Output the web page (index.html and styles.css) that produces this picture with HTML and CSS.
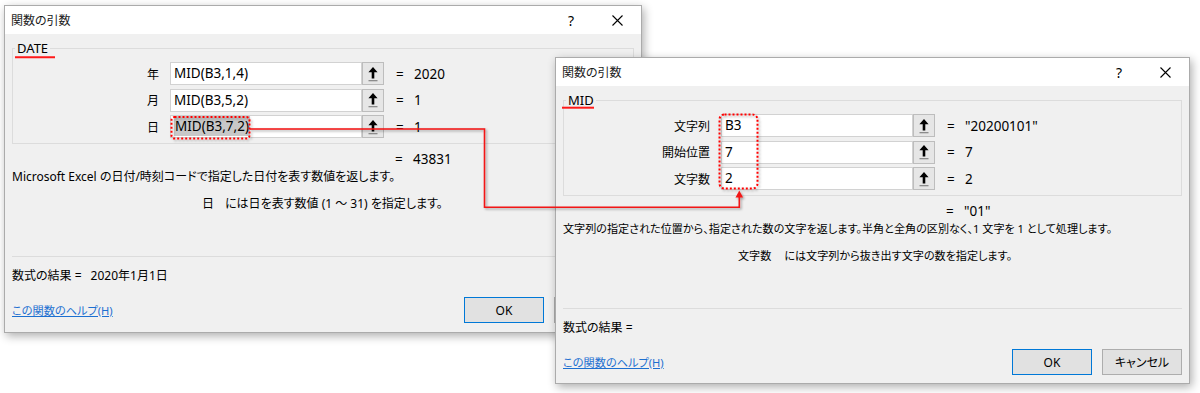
FILE: index.html
```html
<!doctype html>
<html>
<head>
<meta charset="UTF-8">
<title>関数の引数</title>
<link rel="stylesheet" href="styles.css">
</head>
<body>
<div id="desk">

<!-- DATE dialog, behind -->
<div class="dialog dialog-date">
   <div class="titlebar">
      <span class="title">関数の引数</span>
      <span class="tb-btn">?</span>
      <span class="tb-btn"><svg width="11" height="11" viewBox="0 0 11 11"><path d="M0.5 0.5 L10.5 10.5 M10.5 0.5 L0.5 10.5" stroke="#000" stroke-width="1.1"/></svg></span>
   </div>
   <div class="dialog-body">
      <fieldset class="args">
         <legend>DATE</legend>
         <div class="arg-row">
            <span class="arg-name">年</span>
            <span class="arg-input">MID(B3,1,4)</span>
            <span class="ref-btn"><svg width="12" height="16" viewBox="0 0 12 16"><path d="M6 1 L10.6 6.2 H7.3 V12.5 H4.7 V6.2 H1.4 Z" fill="#000"/><rect x="1.5" y="14" width="9" height="1.3" fill="#8C8C8C"/></svg></span>
            <span class="arg-val"><span class="eq">=</span>2020</span>
         </div>
         <div class="arg-row">
            <span class="arg-name">月</span>
            <span class="arg-input">MID(B3,5,2)</span>
            <span class="ref-btn"><svg width="12" height="16" viewBox="0 0 12 16"><path d="M6 1 L10.6 6.2 H7.3 V12.5 H4.7 V6.2 H1.4 Z" fill="#000"/><rect x="1.5" y="14" width="9" height="1.3" fill="#8C8C8C"/></svg></span>
            <span class="arg-val"><span class="eq">=</span>1</span>
         </div>
         <div class="arg-row">
            <span class="arg-name">日</span>
            <span class="arg-input"><span class="sel">MID(B3,7,2)</span></span>
            <span class="ref-btn"><svg width="12" height="16" viewBox="0 0 12 16"><path d="M6 1 L10.6 6.2 H7.3 V12.5 H4.7 V6.2 H1.4 Z" fill="#000"/><rect x="1.5" y="14" width="9" height="1.3" fill="#8C8C8C"/></svg></span>
            <span class="arg-val"><span class="eq">=</span>1</span>
         </div>
      </fieldset>
      <div class="arg-row func-val"><span class="arg-val"><span class="eq">=</span>43831</span></div>
      <p class="func-desc">Microsoft Excel の日付/時刻コードで指定した日付を表す数値を返します。</p>
      <p class="arg-desc date-desc"><span class="arg-desc-name">日</span>には日を表す数値 (1 ～ 31) を指定します。</p>
      <hr class="sep">
      <p class="formula-result">数式の結果 =<span class="formula-val">2020年1月1日</span></p>
      <div class="footer">
         <a class="help-link">この関数のヘルプ(H)</a>
         <button class="btn btn-default">OK</button>
         <button class="btn">キャンセル</button>
      </div>
   </div>
</div>

<!-- MID dialog, front -->
<div class="dialog dialog-mid">
   <div class="titlebar">
      <span class="title">関数の引数</span>
      <span class="tb-btn">?</span>
      <span class="tb-btn"><svg width="11" height="11" viewBox="0 0 11 11"><path d="M0.5 0.5 L10.5 10.5 M10.5 0.5 L0.5 10.5" stroke="#000" stroke-width="1.1"/></svg></span>
   </div>
   <div class="dialog-body">
      <fieldset class="args">
         <legend>MID</legend>
         <div class="arg-row">
            <span class="arg-name">文字列</span>
            <span class="arg-input">B3</span>
            <span class="ref-btn"><svg width="12" height="16" viewBox="0 0 12 16"><path d="M6 1 L10.6 6.2 H7.3 V12.5 H4.7 V6.2 H1.4 Z" fill="#000"/><rect x="1.5" y="14" width="9" height="1.3" fill="#8C8C8C"/></svg></span>
            <span class="arg-val"><span class="eq">=</span>"20200101"</span>
         </div>
         <div class="arg-row">
            <span class="arg-name">開始位置</span>
            <span class="arg-input">7</span>
            <span class="ref-btn"><svg width="12" height="16" viewBox="0 0 12 16"><path d="M6 1 L10.6 6.2 H7.3 V12.5 H4.7 V6.2 H1.4 Z" fill="#000"/><rect x="1.5" y="14" width="9" height="1.3" fill="#8C8C8C"/></svg></span>
            <span class="arg-val"><span class="eq">=</span>7</span>
         </div>
         <div class="arg-row">
            <span class="arg-name">文字数</span>
            <span class="arg-input">2</span>
            <span class="ref-btn"><svg width="12" height="16" viewBox="0 0 12 16"><path d="M6 1 L10.6 6.2 H7.3 V12.5 H4.7 V6.2 H1.4 Z" fill="#000"/><rect x="1.5" y="14" width="9" height="1.3" fill="#8C8C8C"/></svg></span>
            <span class="arg-val"><span class="eq">=</span>2</span>
         </div>
      </fieldset>
      <div class="arg-row func-val"><span class="arg-val"><span class="eq">=</span>"01"</span></div>
      <p class="func-desc">文字列の指定された位置から、指定された数の文字を返します。半角と全角の区別なく、1 文字を 1 として処理します。</p>
      <p class="arg-desc mid-desc"><span class="arg-desc-name">文字数</span>には文字列から抜き出す文字の数を指定します。</p>
      <hr class="sep">
      <p class="formula-result">数式の結果 =</p>
      <div class="footer">
         <a class="help-link">この関数のヘルプ(H)</a>
         <button class="btn btn-default">OK</button>
         <button class="btn">キャンセル</button>
      </div>
   </div>
</div>

<!-- red markup drawn over the screenshot -->
<svg class="markup" width="1200" height="393" viewBox="0 0 1200 393">
   <defs>
      <filter id="glow" x="-20%" y="-200%" width="140%" height="500%">
         <feGaussianBlur stdDeviation="1.6"/>
      </filter>
      <filter id="shade" x="-5%" y="-5%" width="110%" height="110%">
         <feDropShadow dx="1.5" dy="1.5" stdDeviation="1.2" flood-color="#000" flood-opacity="0.35"/>
      </filter>
   </defs>
   <!-- underline under the function names -->
   <line x1="15" y1="58.5" x2="55" y2="58.5" stroke="#FF9A40" stroke-width="3.5" filter="url(#glow)"/>
   <line x1="15" y1="57.2" x2="55" y2="57.2" stroke="#FF1A1A" stroke-width="2"/>
   <line x1="562" y1="109" x2="594" y2="109" stroke="#FF9A40" stroke-width="3.5" filter="url(#glow)"/>
   <line x1="562" y1="107.7" x2="594" y2="107.7" stroke="#FF1A1A" stroke-width="2"/>

   <g filter="url(#shade)">
      <rect x="171.5" y="117" width="78" height="21.5" rx="3" fill="none" stroke="#FF0000" stroke-width="2" stroke-dasharray="2 2"/>
      <rect x="719.5" y="114.5" width="38" height="74" rx="5" fill="none" stroke="#FF0000" stroke-width="2" stroke-dasharray="2 2"/>
      <path d="M250 129 H484.5 V207.3 H739.3 V197" fill="none" stroke="#F21616" stroke-width="1.6"/>
      <path d="M735.5 197.5 L743.1 197.5 L739.3 190.5 Z" fill="#F21616"/>
   </g>
</svg>

</div>
</body>
</html>
```

FILE: styles.css
```css
* {
   box-sizing: border-box;
}

body {
   margin: 0;
   background: #FFFFFF;
   color: #000000;
   font-family: "Noto Sans", "Noto Sans CJK JP", sans-serif;
   font-size: 12px;
   font-feature-settings: "palt";
}

p {
   margin: 0;
}

#desk {
   position: relative;
   width: 1200px;
   height: 393px;
   overflow: hidden;
}

/* windows on the desktop */
.dialog {
   position: absolute;
   display: flex;
   flex-direction: column;
   background: #F0F0F0;
   border: 1px solid #ABABAB;
   box-shadow: 2px 3px 9px rgba(0, 0, 0, 0.32);
}

.dialog-date {
   left: 4px;
   top: 5px;
   width: 638px;
   height: 328px;
}

.dialog-mid {
   left: 555px;
   top: 57px;
   width: 635px;
   height: 327px;
}

.titlebar {
   display: flex;
   align-items: center;
   height: 28px;
   background: #FFFFFF;
   padding-left: 6px;
}

.title {
   flex: 1;
   font-size: 12px;
   color: #1A1A1A;
}

.tb-btn {
   display: flex;
   align-items: center;
   justify-content: center;
   width: 46px;
   height: 28px;
   font-size: 14px;
}

.tb-btn:last-child {
   margin-right: 1px;
}

.dialog-body {
   flex: 1;
   display: flex;
   flex-direction: column;
   padding: 0 7px;
}

/* argument box */
.args {
   margin: 6px 0 0 0;
   padding: 6px 0 0 0;
   height: 104px;
   border: 1px solid #DCDCDC;
   display: flex;
   flex-direction: column;
   gap: 3.5px;
   min-width: 0;
}

.args legend {
   margin-left: 2px;
   padding: 0 2px;
   line-height: 16px;
   font-size: 13px;
}

.arg-row {
   display: grid;
   grid-template-columns: 157px 192px 22px 1fr;
   height: 23px;
   align-items: center;
}

.arg-name {
   text-align: right;
   padding-right: 11px;
}

.arg-input {
   height: 23px;
   background: #FFFFFF;
   border: 1px solid #D2D2D2;
   padding-left: 3px;
   line-height: 21px;
   font-size: 13.5px;
   white-space: nowrap;
   overflow: hidden;
}

.sel {
   display: inline-block;
   background: #C8C8C8;
   line-height: 20px;
   padding: 0 1px;
}

.ref-btn {
   display: flex;
   align-items: center;
   justify-content: center;
   height: 23px;
   background: #E6E6E6;
   border: 1px solid #BDBDBD;
}

.arg-val {
   padding-left: 12px;
   font-size: 13.5px;
   white-space: nowrap;
}

.eq {
   display: inline-block;
   width: 18px;
}

.func-val {
   margin-top: 6px;
   height: 16px;
}

.func-val .arg-val {
   grid-column: 4;
}

.func-desc {
   margin-top: 3px;
   line-height: 16px;
   white-space: nowrap;
}

.arg-desc {
   margin-top: 11px;
   line-height: 16px;
   white-space: nowrap;
}

.date-desc {
   padding-left: 190px;
}

.mid-desc {
   padding-left: 175px;
}

.arg-desc-name {
   margin-right: 11px;
}

.dialog-mid .func-desc,
.dialog-mid .arg-desc {
   font-size: 11.1px;
}

.dialog-mid .arg-desc-name {
   margin-right: 13px;
}

.sep {
   margin: 44px 0 0 0;
   border: 0;
   border-top: 1px solid #DCDCDC;
   height: 0;
}

.formula-result {
   margin-top: 11px;
   line-height: 16px;
}

.formula-val {
   margin-left: 9px;
}

.footer {
   display: flex;
   align-items: center;
   gap: 10px;
   margin-top: 13px;
   height: 26px;
}

.help-link {
   margin-right: auto;
   font-size: 11.2px;
   color: #1C6FD0;
   text-decoration: underline;
   cursor: pointer;
}

.btn {
   width: 80px;
   height: 26px;
   font-family: inherit;
   font-size: 12px;
   font-feature-settings: "palt";
   background: #E1E1E1;
   border: 1px solid #ADADAD;
   color: #000000;
   padding: 0;
}

.btn-default {
   border-color: #0078D7;
}

/* annotation layer */
.markup {
   position: absolute;
   left: 0;
   top: 0;
   pointer-events: none;
}
```
